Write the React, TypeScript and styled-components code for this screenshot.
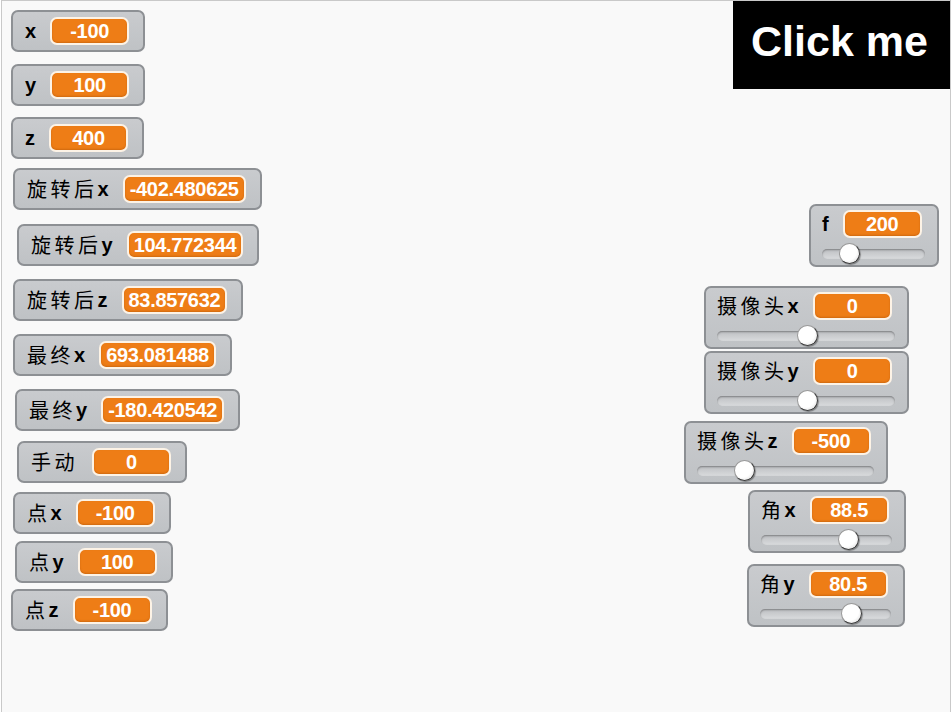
import { FC } from "react"
import styled, { createGlobalStyle } from "styled-components"

const GlobalStyle = createGlobalStyle`
  html, body {
    margin: 0;
    padding: 0;
    background: #ffffff;
    overflow: hidden;
  }
`

const Stage = styled.div`
  position: relative;
  margin-left: 1px;
  width: 948px;
  height: 711px;
  border: 1px solid #c9c9c9;
  border-bottom: none;
  background: #f9f9f9;
  overflow: hidden;
  font-family: "Liberation Sans", Arial, sans-serif;
`

const ClickMe = styled.div`
  position: absolute;
  left: 731px;
  top: 0;
  width: 217px;
  height: 88px;
  background: #000000;
  color: #ffffff;
  font-weight: bold;
  font-size: 43px;
  display: flex;
  align-items: center;
  justify-content: center;
  padding-bottom: 7px;
  padding-right: 4px;
  box-sizing: border-box;
`

const MonitorBox = styled.div<{ $x: number; $y: number }>`
  position: absolute;
  left: ${(p) => p.$x}px;
  top: ${(p) => p.$y}px;
  display: flex;
  flex-direction: column;
  box-sizing: border-box;
  background: linear-gradient(#c9cbce, #bfc2c5);
  border: 2px solid #8d9094;
  border-radius: 7px;
  padding: 5px 14px 5px 12px;
`

const SliderBox = styled(MonitorBox)`
  padding: 4px 15px 6px 11px;
`

const Row = styled.div`
  display: flex;
  align-items: center;
  height: 28px;
`

const Label = styled.div`
  display: flex;
  align-items: center;
  color: #000000;
  margin-right: 14px;
  white-space: nowrap;
`

const Han = styled.span`
  font-family: "Noto Sans CJK SC", "Noto Sans", sans-serif;
  font-size: 20px;
  font-weight: 400;
  letter-spacing: 3.5px;
  line-height: 1;
`

const Latin = styled.span`
  font-family: "Liberation Sans", Arial, sans-serif;
  font-size: 20px;
  font-weight: bold;
  line-height: 1;
`

const Value = styled.div`
  box-sizing: border-box;
  min-width: 79px;
  height: 28px;
  padding: 0 5px;
  border: 2px solid #fdf3e6;
  border-radius: 7px;
  background: #ee7d16;
  box-shadow: inset 0 -1px 2px rgba(150, 70, 0, 0.35);
  color: #ffffff;
  font-family: "Liberation Sans", Arial, sans-serif;
  font-weight: bold;
  font-size: 20px;
  letter-spacing: -0.3px;
  display: flex;
  align-items: center;
  justify-content: center;
  white-space: nowrap;
`

const Track = styled.div`
  position: relative;
  margin-top: 11px;
  margin-right: -3px;
  height: 10px;
  border-radius: 5px;
  background: linear-gradient(#bdbfc2, #d9dbdd);
  box-shadow: inset 0 1px 2px rgba(0, 0, 0, 0.35);
`

const Knob = styled.div`
  position: absolute;
  top: -6px;
  width: 21px;
  height: 21px;
  box-sizing: border-box;
  border-radius: 50%;
  background: radial-gradient(circle at 40% 38%, #ffffff 55%, #e6e6e6 80%);
  border: 1.5px solid #3a3a3a;
  border-top-color: #9a9a9a;
  border-left-color: #9a9a9a;
  box-shadow: 1px 1px 1px rgba(0, 0, 0, 0.35);
`

type Part = { han?: string; latin?: string }

const MonitorLabel: FC<{ parts: Part[] }> = ({ parts }) => (
  <Label>
    {parts.map((p, i) =>
      p.han ? <Han key={i}>{p.han}</Han> : <Latin key={i}>{p.latin}</Latin>
    )}
  </Label>
)

type MonitorData = {
  x: number
  y: number
  parts: Part[]
  value: string
  slider?: number
}

const readouts: MonitorData[] = [
  { x: 9, y: 9, parts: [{ latin: "x" }], value: "-100" },
  { x: 9, y: 63, parts: [{ latin: "y" }], value: "100" },
  { x: 9, y: 116, parts: [{ latin: "z" }], value: "400" },
  { x: 11, y: 167, parts: [{ han: "旋转后" }, { latin: "x" }], value: "-402.480625" },
  { x: 15, y: 223, parts: [{ han: "旋转后" }, { latin: "y" }], value: "104.772344" },
  { x: 11, y: 278, parts: [{ han: "旋转后" }, { latin: "z" }], value: "83.857632" },
  { x: 11, y: 333, parts: [{ han: "最终" }, { latin: "x" }], value: "693.081488" },
  { x: 13, y: 388, parts: [{ han: "最终" }, { latin: "y" }], value: "-180.420542" },
  { x: 15, y: 440, parts: [{ han: "手动" }], value: "0" },
  { x: 11, y: 491, parts: [{ han: "点" }, { latin: "x" }], value: "-100" },
  { x: 13, y: 540, parts: [{ han: "点" }, { latin: "y" }], value: "100" },
  { x: 9, y: 588, parts: [{ han: "点" }, { latin: "z" }], value: "-100" },
]

const sliders: MonitorData[] = [
  { x: 807, y: 203, parts: [{ latin: "f" }], value: "200", slider: 0.21 },
  { x: 702, y: 285, parts: [{ han: "摄像头" }, { latin: "x" }], value: "0", slider: 0.51 },
  { x: 702, y: 350, parts: [{ han: "摄像头" }, { latin: "y" }], value: "0", slider: 0.51 },
  { x: 682, y: 420, parts: [{ han: "摄像头" }, { latin: "z" }], value: "-500", slider: 0.24 },
  { x: 746, y: 489, parts: [{ han: "角" }, { latin: "x" }], value: "88.5", slider: 0.7 },
  { x: 745, y: 563, parts: [{ han: "角" }, { latin: "y" }], value: "80.5", slider: 0.74 },
]

const Readout: FC<{ m: MonitorData }> = ({ m }) => (
  <MonitorBox $x={m.x} $y={m.y}>
    <Row>
      <MonitorLabel parts={m.parts} />
      <Value>{m.value}</Value>
    </Row>
  </MonitorBox>
)

const SliderReadout: FC<{ m: MonitorData }> = ({ m }) => (
  <SliderBox $x={m.x} $y={m.y}>
    <Row>
      <MonitorLabel parts={m.parts} />
      <Value>{m.value}</Value>
    </Row>
    <Track>
      <Knob style={{ left: `calc(${(m.slider ?? 0) * 100}% - ${(m.slider ?? 0) * 21}px)` }} />
    </Track>
  </SliderBox>
)

const App: FC = () => {
  return (
    <>
      <GlobalStyle />
      <Stage>
        <ClickMe>Click me</ClickMe>
        {readouts.map((m, i) => (
          <Readout key={i} m={m} />
        ))}
        {sliders.map((m, i) => (
          <SliderReadout key={i} m={m} />
        ))}
      </Stage>
    </>
  )
}

export default App
